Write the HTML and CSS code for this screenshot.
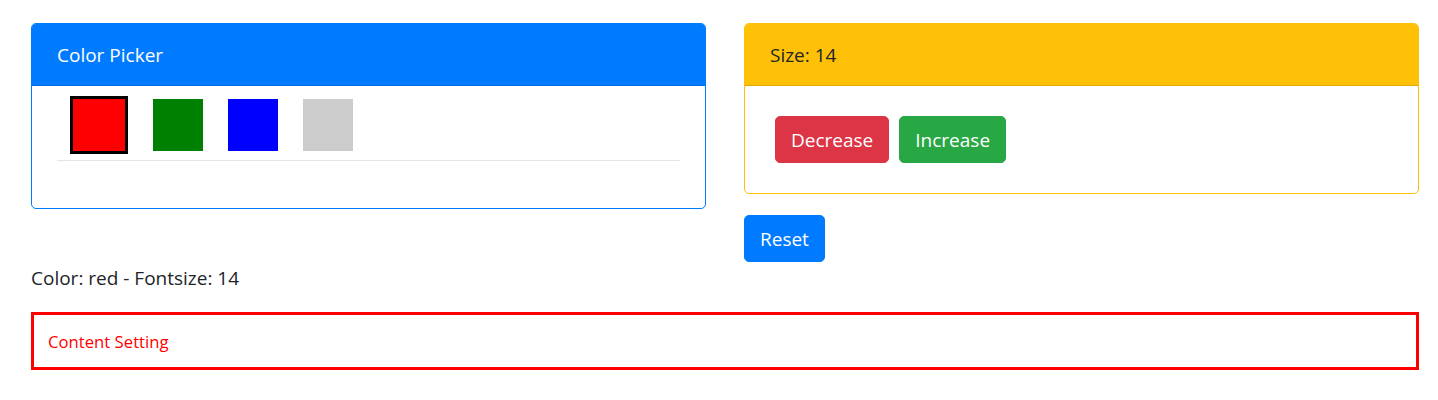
FILE: index.html
```html
<!DOCTYPE html>
<html>
<head>
<meta charset="utf-8">
<link rel="stylesheet" href="styles.css">
</head>
<body>
<div class="page">
  <div class="row">
    <div class="col">
      <div class="card card-primary">
        <div class="card-header header-primary">Color Picker</div>
        <div class="card-body picker-body">
          <div class="swatches">
            <span class="swatch swatch-red selected"></span>
            <span class="swatch swatch-green"></span>
            <span class="swatch swatch-blue"></span>
            <span class="swatch swatch-gray"></span>
          </div>
          <hr class="divider">
        </div>
      </div>
    </div>
    <div class="col">
      <div class="card card-warning">
        <div class="card-header header-warning">Size: 14</div>
        <div class="card-body size-body">
          <button class="btn btn-danger">Decrease</button>
          <button class="btn btn-success">Increase</button>
        </div>
      </div>
      <button class="btn btn-primary reset">Reset</button>
    </div>
  </div>
  <p class="status">Color: red - Fontsize: 14</p>
  <div class="content-box">Content Setting</div>
</div>
</body>
</html>
```

FILE: styles.css
```css
* { box-sizing: border-box; }
body {
  margin: 0;
  font-family: "Open Sans", "Noto Sans", sans-serif;
  font-size: 19px;
  line-height: 30px;
  color: #212529;
  background: #fff;
}
.page {
  padding: 23px 19px 0 31px;
}
.row {
  display: grid;
  grid-template-columns: 1fr 1fr;
  column-gap: 38px;
  align-items: start;
}
.col {
  display: flex;
  flex-direction: column;
  align-items: flex-start;
}
.card {
  width: 100%;
  border: 1px solid;
  border-radius: 5px;
  background: #fff;
  overflow: hidden;
}
.card-primary { border-color: #007bff; }
.card-warning { border-color: #ffc107; }
.card-header {
  height: 62px;
  padding: 0 25px;
  display: flex;
  align-items: center;
  border-bottom: 1px solid rgba(0,0,0,0.125);
}
.header-primary { background: #007bff; color: #fff; }
.header-warning { background: #ffc107; color: #212529; }
.picker-body {
  padding: 8px 25px 0 25px;
  height: 122px;
}
.swatches {
  display: flex;
  align-items: center;
  gap: 25px;
  padding-left: 13px;
  height: 62px;
}
.swatch {
  display: block;
  width: 50px;
  height: 52px;
}
.swatch.selected {
  width: 58px;
  height: 58px;
  border: 3px solid #000;
}
.swatch-red { background: #ff0000; }
.swatch-green { background: #008000; }
.swatch-blue { background: #0000ff; }
.swatch-gray { background: #cccccc; }
.divider {
  margin: 4px 0 0 0;
  border: 0;
  border-top: 1px solid rgba(0,0,0,0.1);
}
.size-body {
  padding: 30px 25px 30px 25px;
  display: flex;
  gap: 10px;
}
.size-body .btn { margin-left: 5px; }
.size-body .btn + .btn { margin-left: 0; }
.btn {
  font-family: inherit;
  font-size: 19px;
  line-height: 30px;
  padding: 7.5px 15px;
  border: 1px solid transparent;
  border-radius: 5px;
  color: #fff;
  cursor: pointer;
}
.btn-danger { background: #dc3545; border-color: #dc3545; }
.btn-success { background: #28a745; border-color: #28a745; }
.btn-primary { background: #007bff; border-color: #007bff; }
.reset {
  margin-top: 21px;
}
.status {
  margin: 1px 0 19px 0;
}
.content-box {
  border: 3px solid #ff0000;
  color: #ff0000;
  font-size: 16.7px;
  line-height: 26px;
  padding: 14px 14px 12px 14px;
}
```
